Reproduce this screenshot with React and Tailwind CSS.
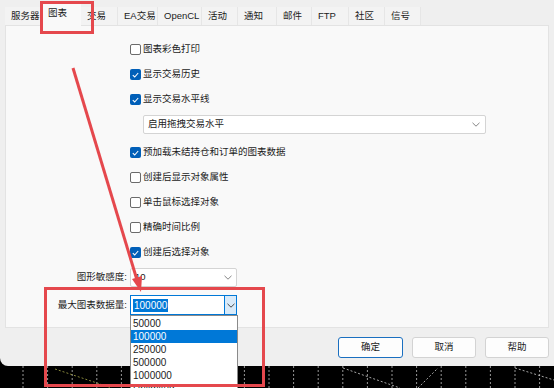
import React from "react";

const tabs = [
  { label: "服务器", w: 36 },
  { label: "图表", w: 40, active: true },
  { label: "交易", w: 37 },
  { label: "EA交易", w: 40 },
  { label: "OpenCL", w: 44 },
  { label: "活动", w: 36 },
  { label: "通知", w: 39 },
  { label: "邮件", w: 35 },
  { label: "FTP", w: 37 },
  { label: "社区", w: 36 },
  { label: "信号", w: 36 },
];

const options = ["50000", "100000", "250000", "500000", "1000000", "Unlimited"];

function Check({ on }) {
  if (on) {
    return (
      <span className="flex h-[11px] w-[11px] items-center justify-center rounded-[2px] bg-[#005fb8]">
        <svg width="7" height="6" viewBox="0 0 7 6">
          <path d="M0.8 3.2 L2.7 5 L6.2 1" fill="none" stroke="#ffffff" strokeWidth="1.1" />
        </svg>
      </span>
    );
  }
  return <span className="h-[11px] w-[11px] rounded-[2px] border border-[#6b6b6b] bg-white" />;
}

function Row({ on, text }) {
  return (
    <div className="flex h-[25px] items-center">
      <div className="w-[124px] shrink-0" />
      <Check on={on} />
      <span className="ml-[2px]">{text}</span>
    </div>
  );
}

function Chevron({ color = "#777" }) {
  return (
    <svg width="8" height="5" viewBox="0 0 8 5">
      <path d="M0.5 0.8 L4 4.2 L7.5 0.8" fill="none" stroke={color} strokeWidth="0.9" />
    </svg>
  );
}

export default function App() {
  const gridX = Array.from({ length: 23 }, (_, i) => 23 + i * 24.6);

  return (
    <div
      className="relative h-[388px] w-[554px] overflow-hidden bg-black text-[9.5px] text-[#1b1b1b]"
      style={{ fontFamily: '"Liberation Sans", "Noto Sans CJK SC", sans-serif' }}
    >
      <div className="flex h-[366px] flex-col rounded-bl-[8px] bg-[#efefef] pl-[5px] pr-[5px] pt-[7px]">
        <div className="flex h-[18px] items-end">
          {tabs.map((t) =>
            t.active ? (
              <div
                key={t.label}
                className="z-10 -mb-[1px] flex h-[23px] items-start bg-[#f9f9f9] pl-[7px] pt-[3px]"
                style={{ width: t.w }}
              >
                {t.label}
              </div>
            ) : (
              <div
                key={t.label}
                className="flex h-[18px] items-center border-r border-[#e6e6e6] bg-[#f3f3f3] pl-[6px]"
                style={{ width: t.w }}
              >
                {t.label}
              </div>
            )
          )}
        </div>

        <div className="h-[303px] border border-[#e3e3e3] bg-[#f9f9f9] pt-[11px]">
          <Row text="图表彩色打印" />
          <Row on text="显示交易历史" />
          <Row on text="显示交易水平线" />
          <div className="mt-[3px] flex">
            <div className="w-[137px] shrink-0" />
            <div className="flex h-[19px] w-[343px] items-center justify-between rounded-[2px] border border-[#d4d4d4] bg-white pl-[4px] pr-[5px]">
              <span>启用拖拽交易水平</span>
              <Chevron />
            </div>
          </div>
          <div className="mt-[6px]">
            <Row on text="预加载未结持仓和订单的图表数据" />
            <Row text="创建后显示对象属性" />
            <Row text="单击鼠标选择对象" />
            <Row text="精确时间比例" />
            <Row on text="创建后选择对象" />
          </div>
          <div className="mt-[3px] flex items-center">
            <div className="w-[124px] shrink-0 pr-[3px] text-right">图形敏感度:</div>
            <div className="flex h-[19px] w-[107px] items-center justify-between rounded-[2px] border border-[#d4d4d4] bg-white pl-[4px] pr-[4px]">
              <span>10</span>
              <Chevron />
            </div>
          </div>
          <div className="mt-[8px] flex items-center">
            <div className="w-[124px] shrink-0 pr-[3px] text-right">最大图表数据量:</div>
            <div className="flex h-[20px] w-[107px] items-stretch border border-[#0078d7] bg-white">
              <div className="flex flex-1 items-center pl-[2px]">
                <span className="bg-[#0078d7] px-[1px] text-[10px] leading-[13px] text-white">100000</span>
              </div>
              <div className="flex w-[12px] items-center justify-center border-l border-[#0078d7] bg-[#d8eaf9]">
                <Chevron color="#333" />
              </div>
            </div>
          </div>
        </div>

        <div className="mt-[9px] flex justify-end gap-[9px]">
          <button className="flex h-[21px] w-[65px] items-center justify-center rounded-[3px] border border-[#1a6fc0] bg-[#fdfdfd]">
            确定
          </button>
          <button className="flex h-[21px] w-[64px] items-center justify-center rounded-[3px] border border-[#d3d3d3] bg-[#fdfdfd]">
            取消
          </button>
          <button className="flex h-[21px] w-[64px] items-center justify-center rounded-[3px] border border-[#d3d3d3] bg-[#fdfdfd]">
            帮助
          </button>
        </div>
      </div>

      <svg width="554" height="22" className="block">
        {gridX.map((x) => (
          <line key={x} x1={x} y1="0" x2={x} y2="22" stroke="#bdbdbd" strokeWidth="0.8" strokeDasharray="2 2" />
        ))}
        <line x1="55" y1="3" x2="112" y2="22" stroke="#a8a84a" strokeWidth="0.8" strokeDasharray="2 2" />
        <line x1="343" y1="2" x2="400" y2="22" stroke="#cfcfcf" strokeWidth="0.8" strokeDasharray="2 2" />
        <line x1="418" y1="22" x2="438" y2="2" stroke="#cfcfcf" strokeWidth="0.8" strokeDasharray="2 2" />
        <line x1="515" y1="2" x2="554" y2="14" stroke="#cfcfcf" strokeWidth="0.8" strokeDasharray="2 2" />
      </svg>

      <div className="absolute left-[130px] top-[315px] z-20 w-[108px] border border-[#8a8a8a] bg-white pt-[1px] text-[10px]">
        {options.map((o) => (
          <div
            key={o}
            className={
              o === "100000"
                ? "h-[13px] bg-[#0078d7] pl-[2px] leading-[13px] text-white"
                : "h-[13px] pl-[2px] leading-[13px]"
            }
          >
            {o}
          </div>
        ))}
      </div>

      <svg className="pointer-events-none absolute inset-0 z-30" width="554" height="388">
        <rect x="41.5" y="2.5" width="51" height="30" fill="none" stroke="#e5484d" strokeWidth="3" />
        <line x1="73" y1="68" x2="137" y2="280" stroke="#e5484d" strokeWidth="3" />
        <polygon points="141,292 132,279 142,276" fill="#e5484d" />
        <rect x="45.5" y="288.5" width="218" height="97" fill="none" stroke="#e5484d" strokeWidth="3" />
      </svg>
    </div>
  );
}
